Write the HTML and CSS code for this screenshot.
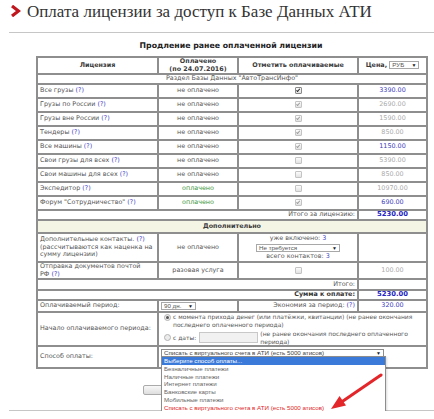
FILE: index.html
```html
<!DOCTYPE html>
<html lang="ru">
<head>
    <meta charset="UTF-8">
    <meta name="viewport" content="width=device-width, initial-scale=1.0">
    <title>Оплата лицензии</title>
    <link rel="stylesheet" href="styles.css">
</head>
<body>
<div class="page">
    <div class="head">
        <svg class="chev" width="11" height="12" viewBox="0 0 11 12"><polyline points="2,1 8.5,6 2,11" fill="none" stroke="#c0161e" stroke-width="3.2"/></svg>
        <h1>Оплата лицензии за доступ к Базе Данных АТИ</h1>
    </div>

    <div class="content">
        <h2 class="subtitle">Продление ранее оплаченной лицензии</h2>
        <table class="lic">
            <colgroup>
                <col class="c1"><col class="c2"><col class="c3"><col class="c4">
            </colgroup>
            <tr class="h17">
                <th>Лицензия</th>
                <th>Оплачено<br>(по 24.07.2016)</th>
                <th>Отметить оплачиваемые</th>
                <th>Цена, <span class="select cur">РУБ<i>▼</i></span></th>
            </tr>
            <tr class="h10"><td colspan="4" class="ctr">Раздел Базы Данных "АвтоТрансИнфо"</td></tr>
            <tr class="h14">
                <td>Все грузы <a href="#">(?)</a></td>
                <td class="ctr">не оплачено</td>
                <td class="ctr"><span class="cb checked active"></span></td>
                <td class="price">3390.00</td>
            </tr>
            <tr class="h14">
                <td>Грузы по России <a href="#">(?)</a></td>
                <td class="ctr">не оплачено</td>
                <td class="ctr"><span class="cb checked"></span></td>
                <td class="price off">2690.00</td>
            </tr>
            <tr class="h14">
                <td>Грузы вне России <a href="#">(?)</a></td>
                <td class="ctr">не оплачено</td>
                <td class="ctr"><span class="cb checked"></span></td>
                <td class="price off">1590.00</td>
            </tr>
            <tr class="h14">
                <td>Тендеры <a href="#">(?)</a></td>
                <td class="ctr">не оплачено</td>
                <td class="ctr"><span class="cb checked"></span></td>
                <td class="price off">850.00</td>
            </tr>
            <tr class="h14">
                <td>Все машины <a href="#">(?)</a></td>
                <td class="ctr">не оплачено</td>
                <td class="ctr"><span class="cb checked"></span></td>
                <td class="price">1150.00</td>
            </tr>
            <tr class="h14">
                <td>Свои грузы для всех <a href="#">(?)</a></td>
                <td class="ctr">не оплачено</td>
                <td class="ctr"><span class="cb"></span></td>
                <td class="price off">5390.00</td>
            </tr>
            <tr class="h14">
                <td>Свои машины для всех <a href="#">(?)</a></td>
                <td class="ctr">не оплачено</td>
                <td class="ctr"><span class="cb"></span></td>
                <td class="price off">850.00</td>
            </tr>
            <tr class="h14">
                <td>Экспедитор <a href="#">(?)</a></td>
                <td class="ctr paid">оплачено</td>
                <td class="ctr"><span class="cb"></span></td>
                <td class="price off">10970.00</td>
            </tr>
            <tr class="h14">
                <td>Форум "Сотрудничество" <a href="#">(?)</a></td>
                <td class="ctr paid">оплачено</td>
                <td class="ctr"><span class="cb checked"></span></td>
                <td class="price">690.00</td>
            </tr>
            <tr class="h10">
                <td colspan="3" class="rgt">Итого за лицензию:</td>
                <td class="price total">5230.00</td>
            </tr>
            <tr class="h13 extra"><td colspan="4" class="ctr">Дополнительно</td></tr>
            <tr class="h29">
                <td>Дополнительные контакты. <a href="#">(?)</a><br>(рассчитываются как наценка на<br>сумму лицензии)</td>
                <td class="ctr">не оплачено</td>
                <td class="ctr">
                    уже включено: <a href="#">3</a><br>
                    <span class="select contacts">Не требуется<i>▼</i></span><br>
                    всего контактов: <a href="#">3</a>
                </td>
                <td></td>
            </tr>
            <tr class="h16">
                <td>Отправка документов почтой<br>РФ <a href="#">(?)</a></td>
                <td class="ctr">разовая услуга</td>
                <td class="ctr"><span class="cb"></span></td>
                <td class="price off">100.00</td>
            </tr>
            <tr class="h11">
                <td colspan="3" class="rgt">Итого:</td>
                <td></td>
            </tr>
            <tr class="h10">
                <td colspan="3" class="rgt strong">Сумма к оплате:</td>
                <td class="price total">5230.00</td>
            </tr>
            <tr class="h12">
                <td>Оплачиваемый период:</td>
                <td><span class="select days">90 дн.<i>▼</i></span></td>
                <td class="rgt">Экономия за период: <a href="#">(?)</a></td>
                <td class="price">320.00</td>
            </tr>
            <tr class="h34">
                <td>Начало оплачиваемого периода:</td>
                <td colspan="3" class="start">
                    <div class="opt">
                        <span class="radio checked"></span>
                        <span>с момента прихода денег (или платёжки, квитанции) (не ранее окончания<br>последнего оплаченного периода)</span>
                    </div>
                    <div class="opt">
                        <span class="radio"></span>
                        <span>с даты:</span>
                        <span class="date"></span>
                        <span>(не ранее окончания последнего оплаченного<br>периода)</span>
                    </div>
                </td>
            </tr>
            <tr class="h22">
                <td>Способ оплаты:</td>
                <td colspan="3" class="pay">
                    <div class="select wide">Списать с виртуального счета в АТИ (есть 5000 атисов)<i>▼</i>
                        <ul class="dropdown">
                            <li class="hl">Выберите способ оплаты...</li>
                            <li>Безналичные платежи</li>
                            <li>Наличные платежи</li>
                            <li>Интернет платежи</li>
                            <li>Банковские карты</li>
                            <li>Мобильные платежи</li>
                            <li class="red">Списать с виртуального счета в АТИ (есть 5000 атисов)</li>
                        </ul>
                    </div>
                </td>
            </tr>
        </table>

        <div class="actions"><button class="btn" aria-label="Продлить лицензию"></button></div>
    </div>
    <div class="foot"></div>
</div>

<!-- pointer to the last payment option -->
<svg class="pointer" width="434" height="419" viewBox="0 0 434 419">
    <line x1="381" y1="375" x2="343" y2="401" stroke="#e3262a" stroke-width="3" stroke-linecap="round"/>
    <polygon points="331,409 339.5,396 346,405.5" fill="#e3262a"/>
</svg>
</body>
</html>
```

FILE: styles.css
```css
body {
    margin: 0;
    font-family: "DejaVu Sans", Verdana, sans-serif;
    font-size: 6.4px;
    color: #555;
    background: #fff;
}
a {
    color: #4646c8;
    text-decoration: none;
}
.page {
    margin-left: 9px;
}
.head {
    display: flex;
    align-items: flex-start;
    height: 32px;
    border-bottom: 1px solid #c6c6c6;
}
.chev {
    margin: 5px 6px 0 1px;
}
.head h1 {
    margin: 2px 0 0;
    font: normal 17px/19px "Liberation Serif", "Times New Roman", serif;
    color: #333;
}
.content {
    width: 390px;
    margin-left: 27px;
}
.subtitle {
    margin: 8px 0 5px;
    font-size: 7.8px;
    line-height: 10px;
    text-align: center;
    color: #222;
}
.lic {
    width: 390px;
    table-layout: fixed;
    border-collapse: collapse;
    border: 2px solid #8e8e8e;
}
.c1 { width: 121px; }
.c2 { width: 80px; }
.c3 { width: 120px; }
.c4 { width: 69px; }
.lic th, .lic td {
    border: 2px solid #8e8e8e;
    padding: 0 2px;
    line-height: 7.5px;
    vertical-align: middle;
    text-align: left;
}
.lic th {
    text-align: center;
    color: #3a3a3a;
}
.h10 { height: 10px; }
.h11 { height: 11px; }
.h12 { height: 12px; }
.h13 { height: 13px; }
.h14 { height: 14px; }
.h16 { height: 16px; }
.h17 { height: 17px; }
.h22 { height: 22px; }
.h29 { height: 29px; }
.h34 { height: 34px; }
.ctr { text-align: center !important; }
.rgt { text-align: right !important; }
.strong { font-weight: bold; color: #333; }
.paid { color: #3c963c; }
.price {
    text-align: center !important;
    color: #3c3cc0;
}
.price.off { color: #aaa; }
.price.total {
    font-weight: bold;
    font-size: 6.8px;
    color: #2424c4;
}
.extra td {
    background: #f5f5e6;
    font-weight: bold;
    color: #3a3a3a;
}

/* fake form controls, drawn in the system sans like real selects */
.select {
    display: inline-flex;
    align-items: center;
    justify-content: space-between;
    box-sizing: border-box;
    height: 8px;
    padding: 0 2px;
    border: 1px solid #a8a8a8;
    background: #fff;
    font: normal 6.2px/6px "Liberation Sans", Arial, sans-serif;
    color: #555;
    vertical-align: middle;
    text-align: left;
}
.select i {
    font-style: normal;
    font-size: 5px;
    color: #222;
}
.select.cur { width: 30px; }
.select.contacts { width: 84px; margin: 1px 0; }
.select.days { width: 35px; }
.select.wide {
    position: relative;
    display: flex;
    width: 223px;
    border-color: #8d8d8d;
    color: #444;
}
.pay {
    vertical-align: top !important;
    padding-top: 2px !important;
}
.dropdown {
    position: absolute;
    left: -1px;
    top: 100%;
    width: 223px;
    margin: 0;
    padding: 0 0 2px;
    list-style: none;
    background: #fff;
    border: 1px solid #8d8d8d;
    box-shadow: 1px 1px 2px rgba(0, 0, 0, 0.15);
    z-index: 2;
}
.dropdown li {
    height: 7.8px;
    line-height: 7.8px;
    padding-left: 2px;
    color: #666;
}
.dropdown li.hl {
    background: #3b7ad8;
    color: #fff;
}
.dropdown li.red { color: #e02626; }

.cb {
    display: inline-block;
    position: relative;
    width: 5px;
    height: 5px;
    border: 1px solid #c4c4c4;
    border-radius: 1px;
    background: linear-gradient(#fcfcfc, #e2e2e2);
    vertical-align: middle;
}
.cb.checked::after {
    content: "";
    position: absolute;
    left: 1.6px;
    top: -0.5px;
    width: 1.4px;
    height: 3.4px;
    border: solid #9a9a9a;
    border-width: 0 1px 1px 0;
    transform: rotate(40deg);
}
.cb.active { border-color: #8a8a8a; }
.cb.active::after { border-color: #222; }

.radio {
    display: inline-block;
    position: relative;
    flex: none;
    width: 5px;
    height: 5px;
    border: 1px solid #b4b4b4;
    border-radius: 50%;
    background: #ececec;
}
.radio.checked::after {
    content: "";
    position: absolute;
    left: 1px;
    top: 1px;
    width: 3px;
    height: 3px;
    border-radius: 50%;
    background: #555;
}
.start {
    padding-left: 5px !important;
    font-size: 6px;
}
.opt {
    display: flex;
    align-items: flex-start;
    gap: 2px;
    white-space: nowrap;
}
.opt .radio { margin-top: 0.5px; }
.opt + .opt {
    margin-top: 2px;
    align-items: center;
}
.date {
    display: inline-block;
    width: 57px;
    height: 9px;
    border: 1px solid #c8c8c8;
    background: #f1f1f1;
    margin-left: 1px;
}

.actions {
    padding: 16px 0 15px;
    text-align: center;
}
.btn {
    display: inline-block;
    width: 176px;
    height: 10px;
    padding: 0;
    border: 1px solid #aaa;
    border-radius: 2px;
    background: linear-gradient(#f8f8f8, #dedede);
    vertical-align: top;
}
.foot {
    border-top: 1px solid #c6c6c6;
}
.pointer {
    position: absolute;
    left: 0;
    top: 0;
    pointer-events: none;
    z-index: 3;
}
```
